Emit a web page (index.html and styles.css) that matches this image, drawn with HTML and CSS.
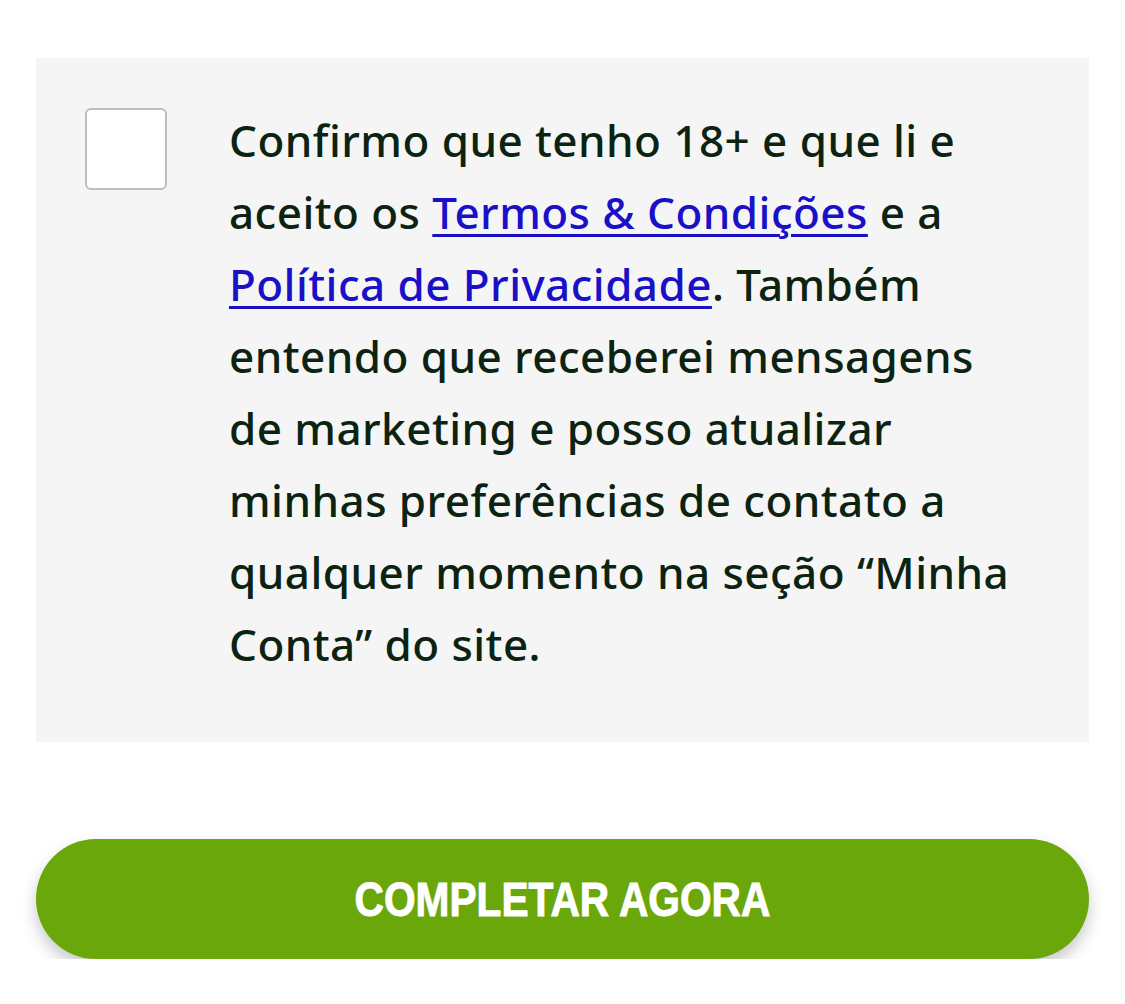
FILE: index.html
```html
<!DOCTYPE html>
<html lang="pt">
<head>
  <meta charset="UTF-8">
  <title>Completar cadastro</title>
  <link rel="stylesheet" href="styles.css">
</head>
<body>
  <div class="wrap">
    <div class="consent">
      <label class="check">
        <input type="checkbox" id="aceito">
        <span class="box"></span>
      </label>
      <p class="consent-text">
        Confirmo que tenho 18+ e que li e aceito os <a href="#">Termos &amp; Condições</a> e a
        <a href="#">Política de Privacidade</a>. Também entendo que receberei mensagens de marketing
        e posso atualizar minhas preferências de contato a qualquer momento na seção “Minha Conta” do site.
      </p>
    </div>
    <button class="btn-complete"><span>COMPLETAR AGORA</span></button>
  </div>
</body>
</html>
```

FILE: styles.css
```css
body {
  margin: 0;
  background: #fff;
  font-family: 'Noto Sans', 'Open Sans', sans-serif;
}
.wrap {
  padding: 58px 36px 0;
}
.consent {
  display: flex;
  align-items: flex-start;
  background: #f4f5f4;
  padding: 46px 40px 62px 49px;
}
.check {
  flex: none;
  margin-top: 4px;
  margin-right: 62px;
}
.check input {
  display: none;
}
.box {
  display: block;
  width: 78px;
  height: 78px;
  background: #fff;
  border: 2px solid #bdbdbd;
  border-radius: 6px;
}
.consent-text {
  margin: 0;
  font-size: 44px;
  font-weight: 500;
  letter-spacing: 0.45px;
  line-height: 72px;
  color: #0c2312;
  max-width: 790px;
}
.consent-text a {
  color: #1a10c8;
  text-decoration-thickness: 3px;
  text-underline-offset: 5px;
}
.btn-complete {
  display: block;
  width: 100%;
  height: 120px;
  margin-top: 97px;
  border: 0;
  border-radius: 60px;
  background: #6aa70b;
  color: #fff;
  font-family: 'Liberation Sans', sans-serif;
  font-weight: bold;
  font-size: 49px;
  box-shadow: 0 8px 16px rgba(0,0,0,0.22);
  cursor: pointer;
}
.btn-complete span {
  display: inline-block;
  transform: scaleX(0.83);
  -webkit-text-stroke: 1px #fff;
}
```
